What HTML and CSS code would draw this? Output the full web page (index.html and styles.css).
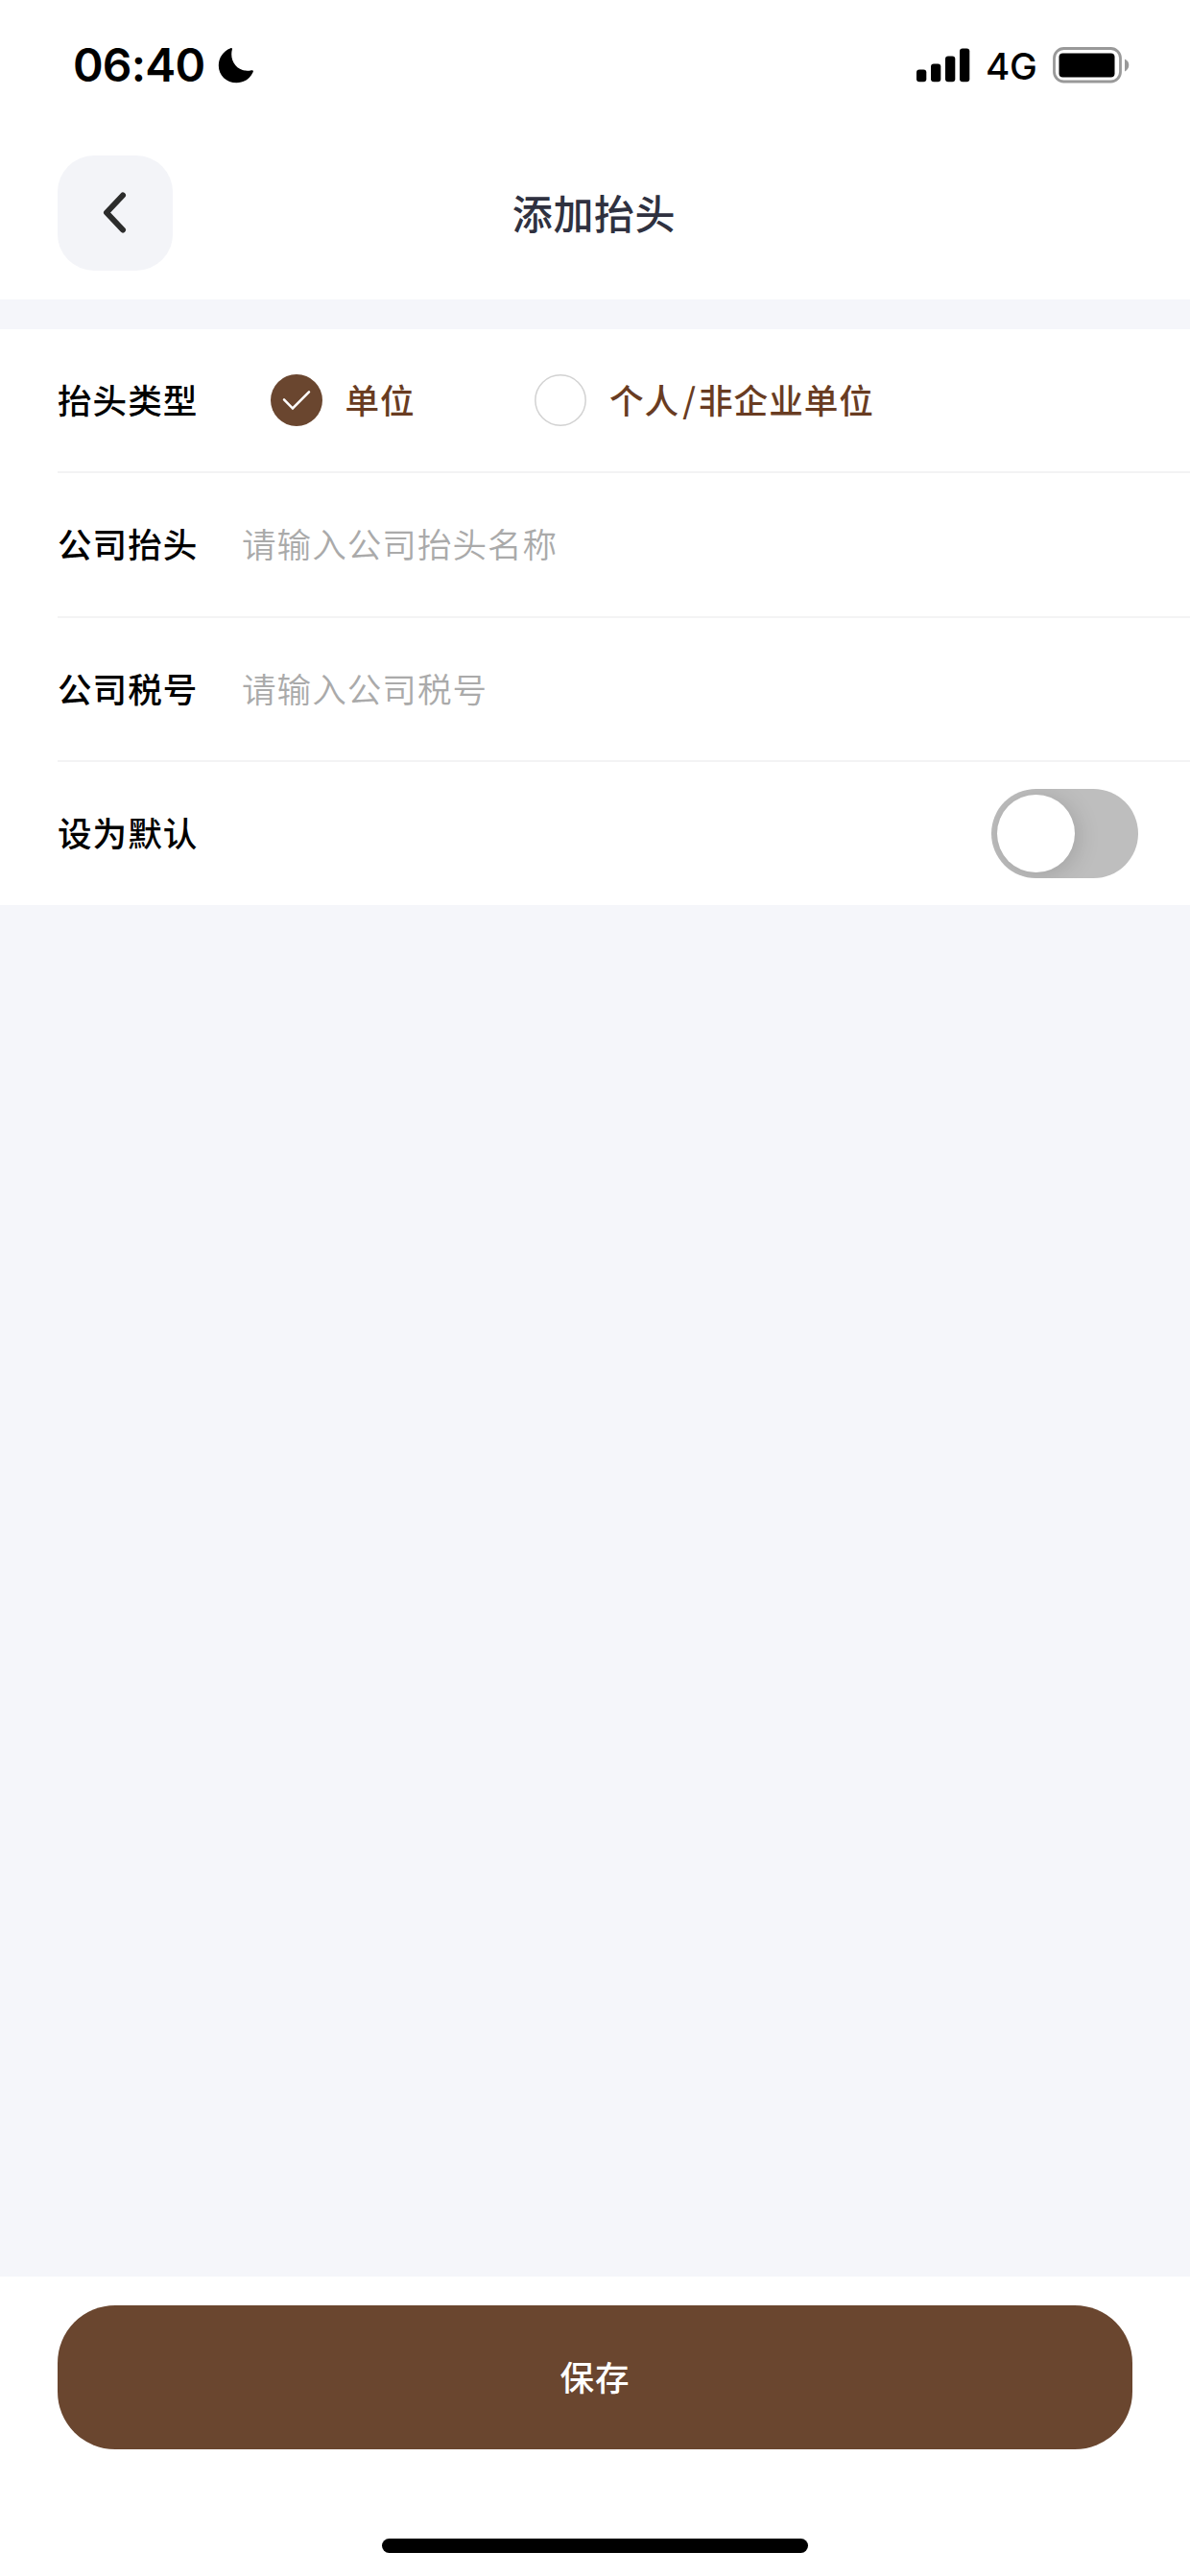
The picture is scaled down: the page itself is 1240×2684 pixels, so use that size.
FILE: index.html
```html
<!DOCTYPE html>
<html lang="zh-CN">
<head>
<meta charset="utf-8">
<title>添加抬头</title>
<link rel="stylesheet" href="styles.css">
</head>
<body>
<div class="screen">
  <div class="status-bar">
    <div class="status-left">
      <span class="clock">06:40</span>
      <svg class="moon" width="38" height="38" viewBox="0 0 38 38"><path d="M13.2 1.2C14.3.6 15.2 1.3 14.9 2.5C11.5 15 21.5 27.500 35 24.200C36.500 23.900 37.300 24.800 36.700 26C33.500 33.200 27 37.300 19.500 37.300C9 37.300 .8 29.500 .8 19.200C.8 11.200 5.500 4.300 13.200 1.200Z"/></svg>
    </div>
    <div class="status-right">
      <svg class="signal" width="56" height="36" viewBox="0 0 56 36"><rect x="0" y="22.500" width="10.300" height="12.800" rx="3"/><rect x="15" y="16.500" width="10.300" height="18.800" rx="3"/><rect x="30" y="8.500" width="10.300" height="26.800" rx="3"/><rect x="45" y="0.500" width="10.300" height="34.800" rx="3"/></svg>
      <span class="network">4G</span>
      <svg class="battery" width="80" height="38" viewBox="0 0 80 38"><rect x="1.500" y="1.500" width="69" height="34.500" rx="10" fill="none" stroke="#999" stroke-width="2.800"/><rect x="6.500" y="6.500" width="58" height="25" rx="4"/><path d="M75 12.500Q79.300 14.500 79.300 18.800T75 25.500Z" fill="#999"/></svg>
    </div>
  </div>

  <header class="nav">
    <button class="back" aria-label="返回"><svg width="28" height="44" viewBox="0 0 28 44"><path d="M22 3.500L5 21.500L22 39.500" fill="none" stroke="#2c2c2c" stroke-width="6" stroke-linecap="round" stroke-linejoin="round"/></svg></button>
    <h1 class="title">添加抬头</h1>
  </header>

  <main class="content">
    <form class="form">
      <div class="row">
        <span class="label type-label">抬头类型</span>
        <span class="option first"><svg class="radio" width="54" height="54" viewBox="0 0 54 54"><circle cx="27" cy="27" r="27" fill="#6a462f"/><path d="M14 26.300L23 35.500L40 18.300" fill="none" stroke="#fff" stroke-width="2.500" stroke-linecap="round"/></svg><span class="text">单位</span></span>
        <span class="option"><svg class="radio" width="54" height="54" viewBox="0 0 54 54"><circle cx="27" cy="27" r="26.200" fill="#fff" stroke="#d2d2d2" stroke-width="1.500"/></svg><span class="text">个人<span class="slash">/</span>非企业单位</span></span>
      </div>
      <div class="row">
        <span class="label">公司抬头</span>
        <span class="placeholder">请输入公司抬头名称</span>
      </div>
      <div class="row">
        <span class="label">公司税号</span>
        <span class="placeholder">请输入公司税号</span>
      </div>
      <div class="row">
        <span class="label">设为默认</span>
        <span class="switch"><span class="knob"></span></span>
      </div>
    </form>
  </main>

  <footer class="footer">
    <button class="save">保存</button>
    <div class="home-indicator"></div>
  </footer>
</div>
</body>
</html>
```
FILE: styles.css
```css
* { box-sizing: border-box; }
body {
  margin: 0;
  background: #fff;
  font-family: "Noto Sans CJK SC", sans-serif;
}
button { border: 0; padding: 0; font-family: inherit; }
.screen {
  width: 1240px;
  height: 2684px;
  display: flex;
  flex-direction: column;
  background: #fff;
}
.status-bar {
  height: 132px;
  display: flex;
  justify-content: space-between;
  align-items: center;
  padding: 3px 63px 0 76px;
  font-family: Inter, sans-serif;
  color: #000;
}
.status-left, .status-right { display: flex; align-items: center; }
.clock {
  width: 151px;
  font-size: 48px;
  font-weight: 600;
  line-height: 58px;
  letter-spacing: -.8px;
  white-space: nowrap;
}
.signal { margin-right: 16px; }
.network { width: 70px; font-size: 38.5px; font-weight: 450; line-height: 46px; margin-top: 3px; letter-spacing: -.2px; }
.nav {
  height: 180px;
  display: grid;
  grid-template-columns: 120px 1fr 120px;
  align-items: center;
  padding: 0 60px;
}
.back {
  width: 120px;
  height: 120px;
  border-radius: 38px;
  background: #f3f4f8;
  display: flex;
  align-items: center;
  justify-content: center;
}
.title {
  margin: 0;
  padding: 0 2px 3px 0;
  text-align: center;
  font-size: 42px;
  font-weight: 500;
  letter-spacing: .6px;
  line-height: 60px;
  color: #2f3140;
}
.content {
  flex: 1;
  padding-top: 31px;
  background: #f5f6fa;
}
.form { background: #fff; padding-left: 60px; }
.row {
  height: 150px;
  display: flex;
  align-items: center;
  border-bottom: 2px solid #f3f3f4;
  font-size: 35.6px;
  line-height: 52px;
  letter-spacing: 1px;
  white-space: nowrap;
}
.row:nth-child(2) { height: 151px; }
.row:last-child { height: 149px; border-bottom: 0; padding-right: 54px; }
.label, .text, .placeholder { padding-bottom: 3px; }
.label { width: 192px; font-weight: 500; color: #000; }
.type-label { width: 221.5px; }
.option { display: flex; align-items: center; gap: 24px; font-weight: 500; color: #693c22; }
.option.first { width: 275.5px; }
.slash { margin: 0 2px 0 3px; }
.placeholder { color: #aaa; font-weight: 350; }
.switch {
  width: 153px;
  height: 93px;
  margin-left: auto;
  padding: 6px;
  border-radius: 47px;
  background: #bebebe;
  overflow: hidden;
}
.knob {
  display: block;
  width: 81px;
  height: 81px;
  border-radius: 50%;
  background: #fff;
  box-shadow: 3px 3px 24px rgba(0, 0, 0, .15);
}
.footer {
  height: 312px;
  padding: 30px 60px 0;
  display: flex;
  flex-direction: column;
  align-items: center;
}
.save {
  width: 1120px;
  height: 150px;
  padding-bottom: 3px;
  border-radius: 60px;
  background: #6a462f;
  color: #fff;
  font-size: 35.6px;
  font-weight: 500;
  letter-spacing: .8px;
}
.home-indicator {
  width: 444px;
  height: 15px;
  margin-top: 93px;
  border-radius: 8px;
  background: #000;
}
```
